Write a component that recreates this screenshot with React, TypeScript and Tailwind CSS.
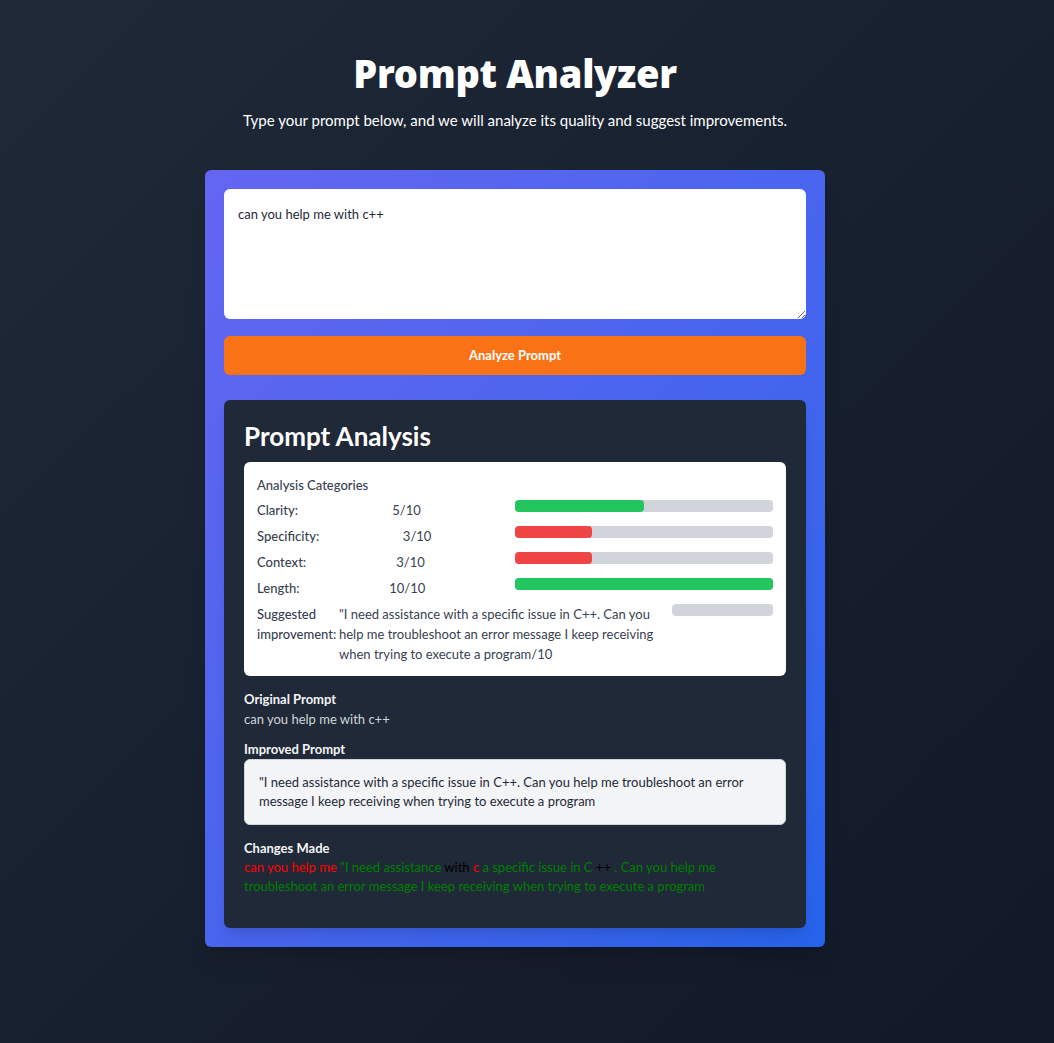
import { useState } from 'react'

const categories = [
  { label: 'Clarity:', score: 5 },
  { label: 'Specificity:', score: 3 },
  { label: 'Context:', score: 3 },
  { label: 'Length:', score: 10 },
]

const suggestion =
  '"I need assistance with a specific issue in C++. Can you help me troubleshoot an error message I keep receiving when trying to execute a program'

const diff = [
  { text: 'can you help me ', color: 'text-[#ff0000]' },
  { text: '"I need assistance ', color: 'text-[#008000]' },
  { text: 'with ', color: 'text-black' },
  { text: 'c ', color: 'text-[#ff0000]' },
  { text: 'a specific issue in C ', color: 'text-[#008000]' },
  { text: '++ ', color: 'text-black' },
  {
    text: '. Can you help me troubleshoot an error message I keep receiving when trying to execute a program',
    color: 'text-[#008000]',
  },
]

function ScoreRow({ label, score }: { label: string; score: number }) {
  const color = score >= 5 ? 'bg-[#22c55e]' : 'bg-[#ef4444]'
  return (
    <div className="flex justify-between text-[13px] leading-5 text-[#374151]">
      <span className="font-medium">{label}</span>
      <span>{score}/10</span>
      <div className="w-1/2 h-3 rounded bg-[#d1d5db]">
        <div className={`h-3 rounded ${color}`} style={{ width: `${score * 10}%` }} />
      </div>
    </div>
  )
}

export default function App() {
  const [prompt, setPrompt] = useState('can you help me with c++')

  return (
    <div
      className="min-h-screen bg-gradient-to-br from-[#1f2937] to-[#111827] text-white pt-[49px] pb-[70px] pr-6"
      style={{ fontFamily: '"Segoe UI", Lato, "Noto Sans", sans-serif' }}
    >
      {/* Header */}
      <div className="text-center">
        <h1 className="font-['Noto_Sans',sans-serif] text-[38px] leading-[48px] font-black tracking-[-0.3px]">
          Prompt Analyzer
        </h1>
        <p className="mt-[11px] text-[15px] leading-6">
          Type your prompt below, and we will analyze its quality and suggest improvements.
        </p>
      </div>

      {/* Main card */}
      <div className="mx-auto mt-[38px] w-[620px] rounded-md bg-gradient-to-br from-[#6366f1] to-[#2563eb] p-[19px] shadow-xl">
        <textarea
          value={prompt}
          onChange={(e) => setPrompt(e.target.value)}
          className="block w-full h-[130px] rounded-md bg-white px-[14px] pt-[15px] text-[13px] leading-5 text-[#1f2937] outline-none"
        />

        <button className="mt-[17px] w-full h-[39px] rounded-md bg-[#f97316] text-[13px] font-bold text-white">
          Analyze Prompt
        </button>

        {/* Analysis panel */}
        <div className="mt-[25px] rounded-md bg-[#1f2937] px-5 pt-5 pb-[32px] shadow-lg">
          <h2 className="text-[26px] leading-8 font-bold text-white">Prompt Analysis</h2>

          <div className="mt-2.5 rounded-md bg-white p-[13px] pb-3">
            <div className="text-[13px] leading-5 font-medium text-[#374151]">Analysis Categories</div>
            <div className="mt-[5px] flex flex-col gap-1.5">
              {categories.map((c) => (
                <ScoreRow key={c.label} label={c.label} score={c.score} />
              ))}
              <div className="flex text-[13px] leading-5 text-[#374151]">
                <span className="font-medium w-[82px] shrink-0">Suggested improvement:</span>
                <span className="flex-1">{suggestion}/10</span>
                <div className="w-[101px] h-3 rounded bg-[#d1d5db] shrink-0 ml-[15px]" />
              </div>
            </div>
          </div>

          <div className="mt-[13px] text-[13px] leading-5">
            <div className="font-bold text-[#f3f4f6]">Original Prompt</div>
            <div className="text-[#d1d5db]">can you help me with c++</div>
          </div>

          <div className="mt-2.5 text-[13px] leading-5">
            <div className="font-bold text-[#f3f4f6]">Improved Prompt</div>
            <div className="rounded-md border border-[#d1d5db] bg-[#f3f4f6] px-[14px] py-[13px] leading-[19px] text-[#1f2937]">
              {suggestion}
            </div>
          </div>

          <div className="mt-[13px] text-[13px] leading-5">
            <div className="font-bold text-[#f3f4f6]">Changes Made</div>
            <p className="leading-[19px]">
              {diff.map((d, i) => (
                <span key={i} className={d.color}>
                  {d.text}
                </span>
              ))}
            </p>
          </div>
        </div>
      </div>
    </div>
  )
}
